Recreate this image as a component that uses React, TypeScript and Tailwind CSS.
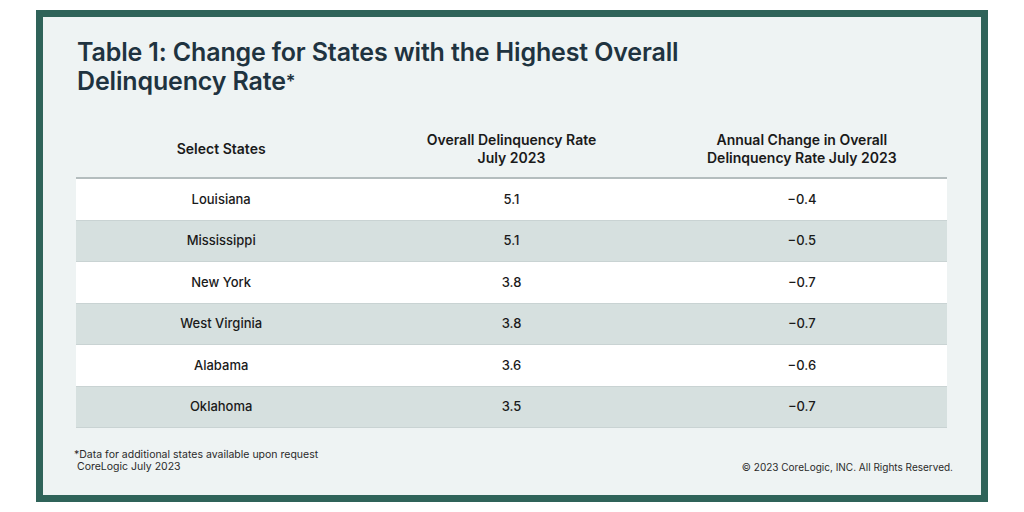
import React from "react";

const rows = [
  ["Louisiana", "5.1", "\u22120.4"],
  ["Mississippi", "5.1", "\u22120.5"],
  ["New York", "3.8", "\u22120.7"],
  ["West Virginia", "3.8", "\u22120.7"],
  ["Alabama", "3.6", "\u22120.6"],
  ["Oklahoma", "3.5", "\u22120.7"],
];

export default function App() {
  return (
    <div className="w-[1024px] h-[512px] bg-white pt-[10px] pl-[36px]" style={{ fontFamily: "Inter, 'Noto Sans', sans-serif" }}>
      <div className="w-[952px] h-[492px] border-[7px] border-[#2f6359] bg-[#eef3f3] flex flex-col">
        <div className="pl-[34px] pt-[21px] text-[25px] leading-[29px] font-semibold text-[#1f3340] tracking-[-0.15px]">
          Table 1: Change for States with the Highest Overall
          <br />
          Delinquency Rate<span className="align-top text-[18px]">*</span>
        </div>
        <div className="ml-[33px] w-[871px] mt-[25px]">
          <div className="grid grid-cols-3 h-[58px] items-center text-[14px] leading-[18px] font-semibold text-[#1a1a1a] text-center border-b-2 border-[#b4bdbe]">
            <div>Select States</div>
            <div>
              Overall Delinquency Rate
              <br />
              July 2023
            </div>
            <div>
              Annual Change in Overall
              <br />
              Delinquency Rate July 2023
            </div>
          </div>
          {rows.map((r, i) => (
            <div
              key={i}
              className={`grid grid-cols-3 h-[41.5px] items-center text-center text-[13px] font-medium text-[#1a1a1a] border-b border-[#c9d3d3] ${i % 2 === 0 ? "bg-white" : "bg-[#d6e0df]"}`}
            >
              <div>{r[0]}</div>
              <div>{r[1]}</div>
              <div>{r[2]}</div>
            </div>
          ))}
        </div>
        <div className="flex justify-between items-end ml-[31px] mr-[28px] mt-[21px] text-[10.5px] leading-[12px] text-[#2a2a2a]">
          <div>
            <div>*Data for additional states available upon request</div>
            <div className="pl-[3px]">CoreLogic July 2023</div>
          </div>
          <div className="text-[10px]">© 2023 CoreLogic, INC. All Rights Reserved.</div>
        </div>
      </div>
    </div>
  );
}
